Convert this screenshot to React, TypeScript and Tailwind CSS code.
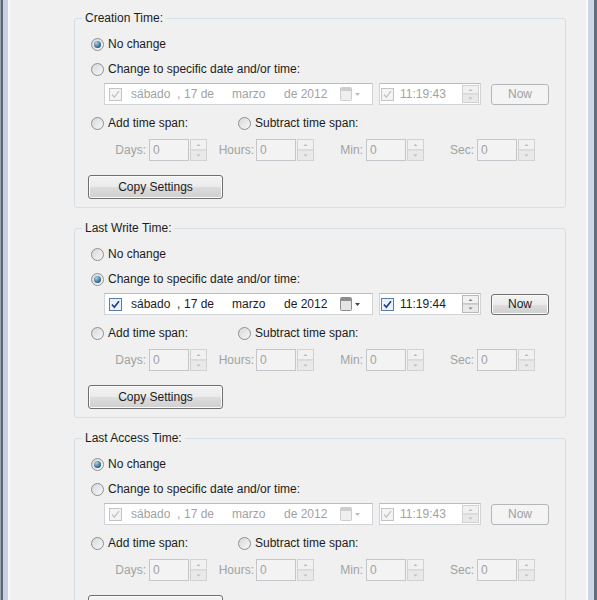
import React from "react";

const dim = "text-[#a2a2a2]";
const ink = "text-[#1c1c1c]";

function Radio({ on, label, className = "" }: { on?: boolean; label: string; className?: string }) {
  return (
    <div className={`flex items-center h-[20px] ${className}`}>
      <span className="relative w-[13px] h-[13px] rounded-full border border-[#8c8f92] bg-[linear-gradient(135deg,#d6d8da,#f7f7f7)] flex items-center justify-center shrink-0">
        {on && (
          <span className="w-[7px] h-[7px] rounded-full bg-[radial-gradient(circle_at_35%_30%,#a9d2ea,#2d6183_70%,#1b3e55)]" />
        )}
      </span>
      <span className={`ml-[4px] ${ink}`}>{label}</span>
    </div>
  );
}

function Check({ on }: { on: boolean }) {
  return (
    <svg width="13" height="13" viewBox="0 0 13 13" className="shrink-0">
      <rect
        x="0.5"
        y="0.5"
        width="12"
        height="12"
        fill={on ? "#e9f1fb" : "#f4f4f4"}
        stroke={on ? "#5a7ba6" : "#c4c4c4"}
      />
      <path
        d="M3 6.5 L5.3 9.2 L10 3.2"
        fill="none"
        stroke={on ? "#1f3f8a" : "#c2c2c2"}
        strokeWidth={on ? 1.7 : 1.2}
      />
    </svg>
  );
}

function Arrows({ w, h, on }: { w: number; h: number; on?: boolean }) {
  const c = on ? "#7a7a7a" : "#b9b9b9";
  const half = h / 2;
  return (
    <svg width={w} height={h} viewBox={`0 0 ${w} ${h}`} className="shrink-0">
      <rect x="0.5" y="0.5" width={w - 1} height={half - 0.5} fill="#f1f1f1" stroke={on ? "#b8b8b8" : "#d2d2d2"} />
      <rect x="0.5" y={half} width={w - 1} height={half - 0.5} fill="#e9e9e9" stroke={on ? "#b8b8b8" : "#d2d2d2"} />
      <path d={`M${w / 2 - 2} ${half / 2 + 1.5} L${w / 2} ${half / 2 - 0.5} L${w / 2 + 2} ${half / 2 + 1.5}Z`} fill={c} />
      <path d={`M${w / 2 - 2} ${half + half / 2 - 1} L${w / 2} ${half + half / 2 + 1} L${w / 2 + 2} ${half + half / 2 - 1}Z`} fill={c} />
    </svg>
  );
}

function CalIcon({ on }: { on: boolean }) {
  const c = on ? "#8d8d8d" : "#cdcdcd";
  return (
    <svg width="24" height="14" viewBox="0 0 24 14" className="shrink-0">
      <rect x="0.5" y="0.5" width="11" height="13" rx="1" fill={on ? "#e4e4e4" : "#efefef"} stroke={c} />
      <rect x="1" y="1" width="10" height="3" fill={c} />
      <path d="M15 6 L20 6 L17.5 9Z" fill={on ? "#444" : "#bdbdbd"} />
    </svg>
  );
}

function DateRow({ on, time }: { on: boolean; time: string }) {
  const t = on ? ink : dim;
  return (
    <div className="flex items-center h-[22px] mt-[4px] pl-[29px]">
      <div className="flex items-center w-[269px] h-[22px] bg-white border border-[#d0d3d8] border-t-[#b9bcc2] pl-[4px] pr-[8px]">
        <Check on={on} />
        <span className={`ml-[9px] w-[46px] ${t}`}>sábado</span>
        <span className={`w-[7px] ${t}`}>,</span>
        <span className={`w-[48px] ${t}`}>17 de</span>
        <span className={`w-[52px] ${t}`}>marzo</span>
        <span className={`${t}`}>de 2012</span>
        <span className="ml-auto">
          <CalIcon on={on} />
        </span>
      </div>
      <div className="flex items-center ml-[6px] w-[102px] h-[22px] bg-white border border-[#d0d3d8] border-t-[#b9bcc2] pl-[1px] pr-[1px]">
        <Check on={on} />
        <span className={`ml-[6px] ${t}`}>{time}</span>
        <span className="ml-auto">
          <Arrows w={17} h={18} on={on} />
        </span>
      </div>
      <Btn on={on} className="ml-[10px] w-[58px] h-[21px]">
        Now
      </Btn>
    </div>
  );
}

function Btn({ on, className = "", children }: { on: boolean; className?: string; children: React.ReactNode }) {
  return (
    <div
      className={`flex items-center justify-center rounded-[3px] border ${
        on
          ? "border-[#707070] bg-[linear-gradient(#f3f3f3,#ebebeb_50%,#dddddd_50%,#cfcfcf)] shadow-[inset_0_0_0_1px_#fbfbfb] text-[#1c1c1c]"
          : "border-[#b4b7ba] bg-[#f4f4f4] text-[#a0a0a0]"
      } ${className}`}
    >
      {children}
    </div>
  );
}

function Num({ label, lw, gap }: { label: string; lw: number; gap: number }) {
  return (
    <div className="flex items-center">
      <span className={`text-right ${dim}`} style={{ width: lw }}>
        {label}
      </span>
      <div
        className="w-[40px] h-[22px] border border-[#c3c6ca] bg-[#f3f3f3] flex items-center pl-[3px] text-[#a2a2a2]"
        style={{ marginLeft: gap }}
      >
        0
      </div>
      <span className="ml-[1px] flex items-center">
        <Arrows w={17} h={22} />
      </span>
    </div>
  );
}

function Group({ title, mode, time }: { title: string; mode: "none" | "date"; time: string }) {
  return (
    <fieldset className="border border-[#d5dfe5] rounded-[3px] ml-[64px] mr-[20px] pb-[8px]">
      <legend className={`ml-[7px] px-[3px] leading-[16px] ${ink}`}>{title}</legend>
      <Radio on={mode === "none"} label="No change" className="mt-[8px] pl-[16px]" />
      <Radio on={mode === "date"} label="Change to specific date and/or time:" className="mt-[5px] pl-[16px]" />
      <DateRow on={mode === "date"} time={time} />
      <div className="flex items-center h-[20px] mt-[8px] pl-[16px]">
        <Radio label="Add time span:" className="w-[147px]" />
        <Radio label="Subtract time span:" />
      </div>
      <div className="flex items-center h-[22px] mt-[6px] pl-[16px]">
        <Num label="Days:" lw={55} gap={3} />
        <Num label="Hours:" lw={47} gap={2} />
        <Num label="Min:" lw={49} gap={3} />
        <Num label="Sec:" lw={50} gap={3} />
      </div>
      <div className="mt-[14px] pl-[13px]">
        <Btn on className="w-[135px] h-[24px]">
          Copy Settings
        </Btn>
      </div>
    </fieldset>
  );
}

export default function App() {
  return (
    <div className="w-[597px] h-[600px] overflow-hidden flex bg-[#f0f0f0] text-[12px] font-['Liberation_Sans',Arial,sans-serif]">
      {/* left frame */}
      <div className="flex shrink-0">
        <div className="w-[1px] bg-[#9aa4ae]" />
        <div className="w-[2px] bg-[#5d6874]" />
        <div className="w-[5px] bg-[#c8d1ec]" />
        <div className="w-[2px] bg-[#f8faf7]" />
      </div>
      <div className="flex-1 pt-[10px] flex flex-col gap-[12px]">
        <Group title="Creation Time:" mode="none" time="11:19:43" />
        <Group title="Last Write Time:" mode="date" time="11:19:44" />
        <Group title="Last Access Time:" mode="none" time="11:19:43" />
      </div>
      {/* right frame */}
      <div className="flex shrink-0">
        <div className="w-[2px] bg-[#fafafa]" />
        <div className="w-[6px] bg-[#ccd6ea]" />
        <div className="w-[3px] bg-[#646e7a]" />
      </div>
    </div>
  );
}
